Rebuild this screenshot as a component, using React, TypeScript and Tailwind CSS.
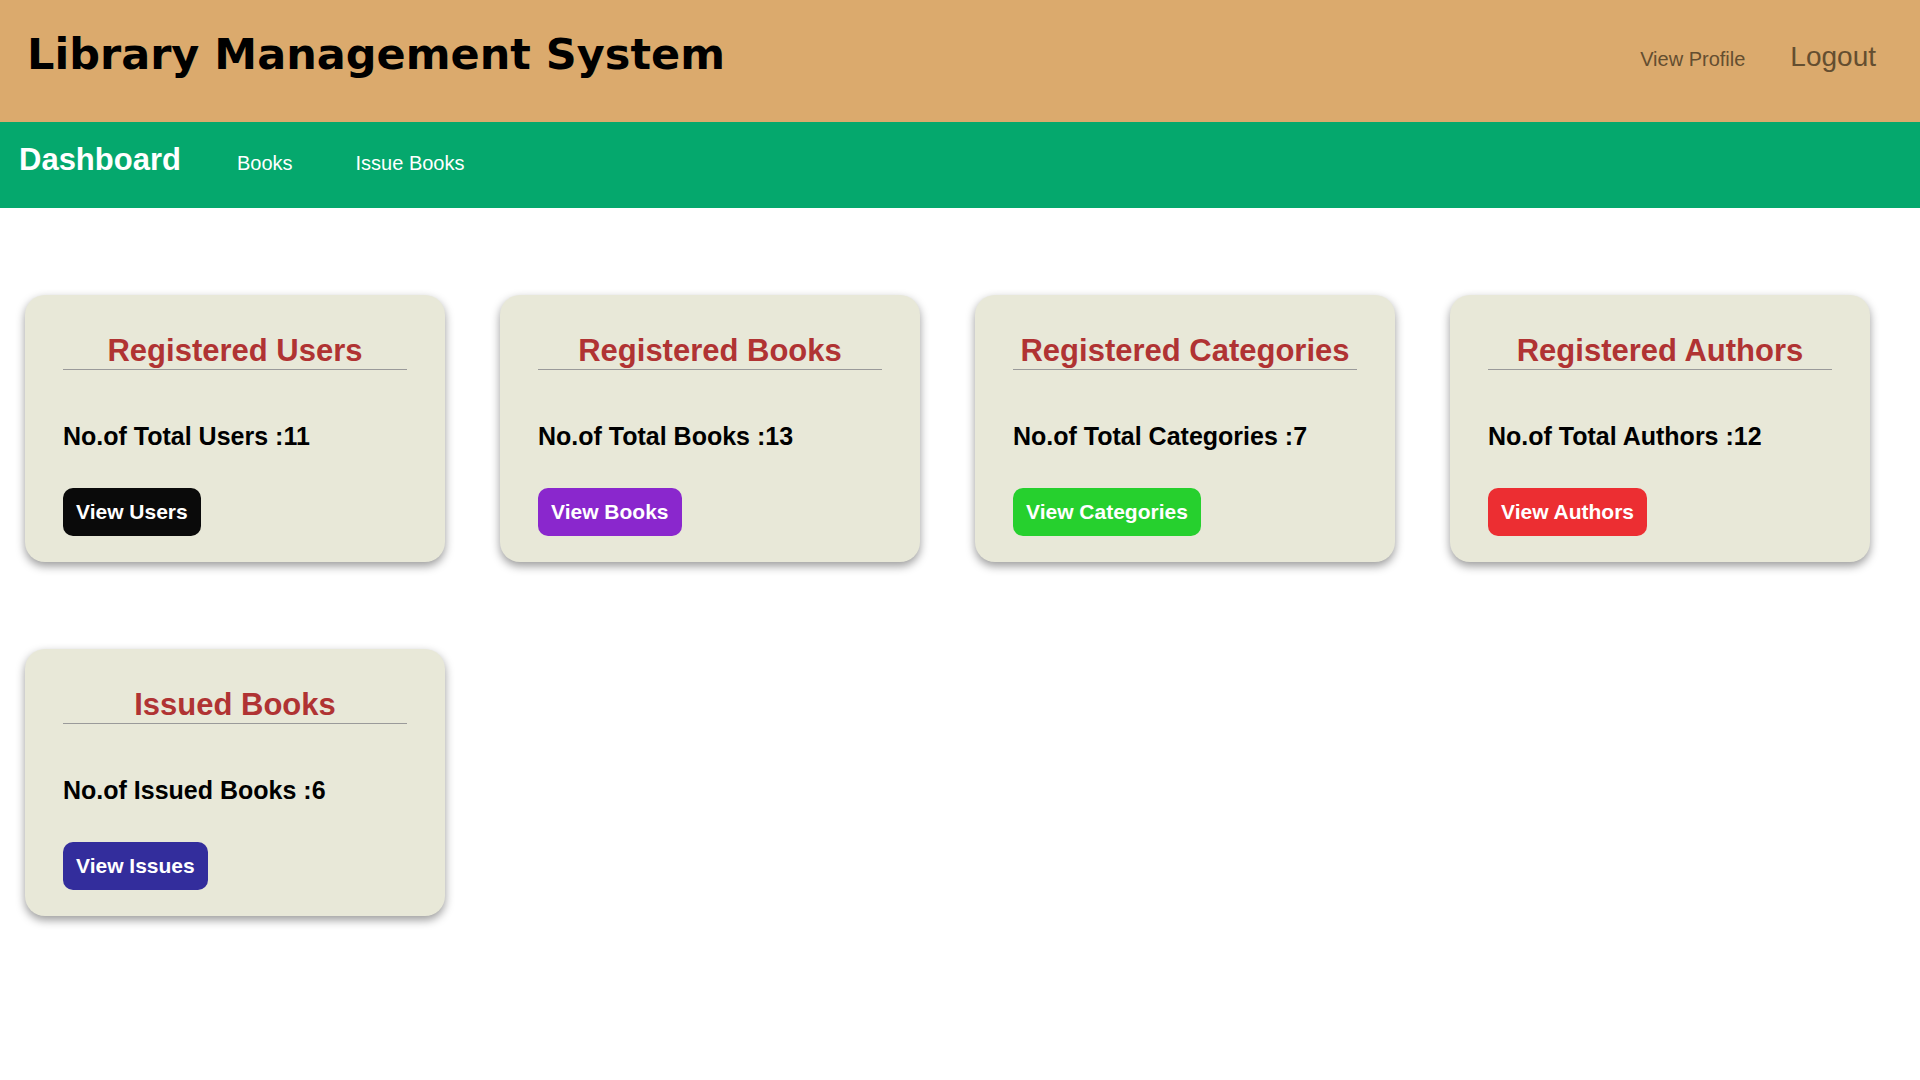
import React from 'react';

interface StatCard {
  title: string;
  label: string;
  count: number;
  button: string;
  color: string;
}

const cards: StatCard[] = [
  { title: 'Registered Users', label: 'No.of Total Users', count: 11, button: 'View Users', color: 'bg-[#0a0a0a]' },
  { title: 'Registered Books', label: 'No.of Total Books', count: 13, button: 'View Books', color: 'bg-[#8a27cd]' },
  { title: 'Registered Categories', label: 'No.of Total Categories', count: 7, button: 'View Categories', color: 'bg-[#26d02e]' },
  { title: 'Registered Authors', label: 'No.of Total Authors', count: 12, button: 'View Authors', color: 'bg-[#ec2e32]' },
  { title: 'Issued Books', label: 'No.of Issued Books', count: 6, button: 'View Issues', color: 'bg-[#332d9c]' },
];

function Card({ card }: { card: StatCard }) {
  return (
    <div className="w-[420px] h-[267px] rounded-[20px] bg-[#e8e8d8] px-[38px] pt-[38px] shadow-[0_4px_10px_rgba(0,0,0,0.4)]">
      <h2 className="text-center text-[31px] leading-[36px] font-bold text-[#b03333] border-b border-[#9a9a9a]">
        {card.title}
      </h2>
      <p className="mt-[52px] text-[25px] leading-[28px] font-bold text-black">
        {card.label} :{card.count}
      </p>
      <button className={`mt-[38px] h-[48px] px-[13px] rounded-[10px] text-white text-[21px] font-bold ${card.color}`}>
        {card.button}
      </button>
    </div>
  );
}

export default function App() {
  return (
    <div className="min-h-screen bg-white font-['Liberation_Sans',Arial,sans-serif]">
      {/* Cabecera */}
      <header className="h-[122px] bg-[#dbaa6d] flex items-start justify-between pl-[27px] pr-[44px] pt-[28px]">
        <h1 className="font-['DejaVu_Sans',Verdana,sans-serif] text-[43px] leading-[52px] font-bold text-black">
          Library Management System
        </h1>
        <div className="mt-[13px] flex items-baseline gap-[45px] text-[#644e30]">
          <a className="text-[20px] cursor-pointer">View Profile</a>
          <a className="text-[28px] leading-[32px] cursor-pointer">Logout</a>
        </div>
      </header>

      {/* Barra de navegación */}
      <nav className="h-[86px] bg-[#05a86d] flex items-baseline pl-[19px] pt-[20px] text-white">
        <span className="text-[31px] leading-[36px] font-bold">Dashboard</span>
        <a className="ml-[56px] text-[20px] cursor-pointer">Books</a>
        <a className="ml-[63px] text-[20px] cursor-pointer">Issue Books</a>
      </nav>

      <main className="grid grid-cols-[repeat(4,420px)] gap-x-[55px] gap-y-[87px] pl-[25px] pt-[87px] pb-[40px]">
        {cards.map((card) => (
          <Card key={card.title} card={card} />
        ))}
      </main>
    </div>
  );
}
